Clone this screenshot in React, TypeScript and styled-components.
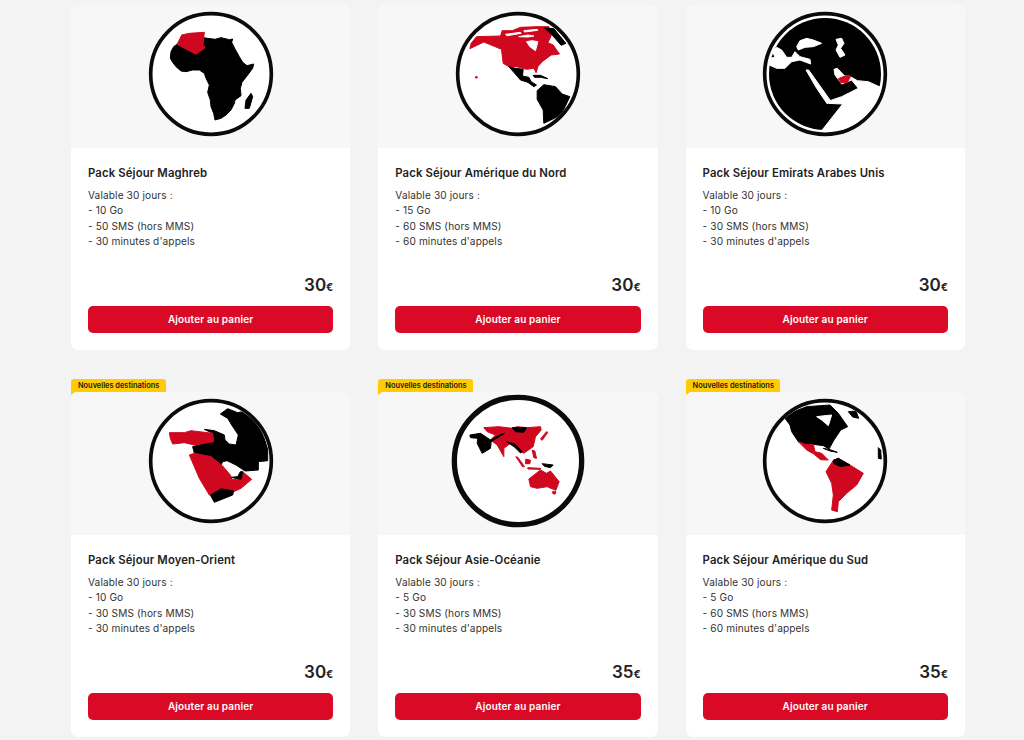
import React from "react";
import styled, { createGlobalStyle } from "styled-components";

const Global = createGlobalStyle`
  html, body { margin: 0; padding: 0; height: 740px; overflow: hidden; background: #f3f3f3; }
  body { font-family: Inter, "Noto Sans", "Liberation Sans", sans-serif; color: #1a1a1a; }
`;
const Grid = styled.main`
  display: grid;
  grid-template-columns: repeat(3, 279.3px);
  column-gap: 28px;
  row-gap: 42px;
  padding: 5px 0 0 71px;
`;
const Card = styled.article`
  position: relative;
  height: 345px;
  display: flex;
  flex-direction: column;
  border-radius: 7px;
  background: #fff;
`;
const Badge = styled.span`
  position: absolute;
  left: 0;
  top: -13px;
  width: 94.5px;
  height: 13px;
  padding-left: 7px;
  box-sizing: border-box;
  background: #ffcb05;
  border-radius: 3px 3px 0 0;
  font-size: 7.4px;
  font-weight: 600;
  line-height: 13px;
  white-space: nowrap;
  &::after {
    content: "";
    position: absolute;
    left: 0;
    bottom: -3px;
    border-top: 3px solid #ffcb05;
    border-right: 4px solid transparent;
  }
`;
const Visual = styled.div`
  height: 143px;
  display: flex;
  justify-content: center;
  background: #f7f7f7;
  border-radius: 7px 7px 0 0;
`;
const Body = styled.div`
  flex: 1;
  display: flex;
  flex-direction: column;
  padding: 17px 17px 17px;
`;
const Title = styled.h3`
  margin: 0 0 6px;
  font-size: 11.3px;
  line-height: 17px;
  font-weight: 600;
  letter-spacing: 0.14px;
  color: #222;
`;
const Desc = styled.p`
  margin: 0;
  font-size: 10.1px;
  line-height: 15.4px;
  letter-spacing: 0.13px;
  color: #333;
  white-space: pre-line;
`;
const Price = styled.div`
  margin-top: auto;
  text-align: right;
  font-size: 17px;
  line-height: 22px;
  font-weight: 600;
  color: #222;
  small { font-size: 10.5px; font-weight: 700; }
`;
const Button = styled.button`
  margin-top: 7px;
  height: 27.5px;
  border: 0;
  border-radius: 5px;
  background: #da0a27;
  color: #fff;
  font: 600 10px Inter, "Liberation Sans", sans-serif;
  letter-spacing: 0.14px;
`;

const R = "#d0081f";
const K = "#000";
const W = "#fff";
type Shape = [string, string];
type MapDef = { dx: number; dy: number; r?: number; sw?: number; shapes: Shape[]; disc?: boolean };

const maps: Record<string, MapDef> = {
  maghreb: {
    dx: 0, dy: 0,
    shapes: [
      [K, "108,118 98,125 90,140 88,160 95,172 105,185 120,198 135,200 155,195 175,195 190,205 195,220 205,240 200,262 208,285 210,305 218,325 222,345 240,340 255,330 270,315 280,295 282,285 300,272 298,250 303,232 320,210 335,190 338,177 318,182 305,172 295,155 282,132 272,112 275,102 265,104 240,98 222,103 200,100 188,98 186,118 192,128 165,148"],
      [R, "122,90 145,85 190,82 188,100 186,118 192,128 165,148 135,132 108,118 115,105"],
      [K, "330,265 335,275 325,310 312,310 315,285"],
    ],
  },
  nord: {
    dx: -22.5, dy: -15,
    shapes: [
      [R, "88,146 92,130 108,110 180,108 185,92 215,92 240,82 290,80 325,80 332,108 322,128 338,135 357,162 332,165 305,185 292,200 287,218 280,205 258,208 228,200 205,200 188,190 183,148 130,126"],
      [W, "258,125 275,122 292,125 285,152 268,140"],
      [W, "195,103 240,97 242,100 200,107"],
      [W, "250,92 290,88 292,91 252,96"],
      [W, "235,110 262,105 280,108 262,111"],
      [K, "205,200 225,205 248,208 246,228 265,232 272,245 288,255 280,260 262,247 240,240 220,217"],
      [K, "312,84 340,86 376,130 362,136 335,105"],
      [K, "290,272 310,254 345,260 365,282 388,290 362,345 310,370 308,330 290,298"],
      [K, "278,226 300,226 322,236 300,232 282,232"],
      [R, "105,230 110,230 110,234 105,234"],
    ],
  },
  emirats: {
    dx: -15, dy: -15, disc: true,
    shapes: [
      [W, "58,175 75,172 68,155 80,142 95,150 110,172 125,172 135,155 150,170 180,178 182,192 150,180 125,185 105,205 80,205 58,195"],
      [W, "150,122 170,115 190,120 215,130 190,140 165,142 145,150 140,140"],
      [W, "258,118 275,115 282,130 272,145 285,165 270,172 258,150 265,135"],
      [W, "168,210 176,210 240,300 232,312 200,265"],
      [W, "252,208 262,205 282,226 305,232 322,242 355,245 392,262 402,300 340,385 215,392 278,312 235,310 240,302 275,290 325,265 305,240 275,252 255,225"],
      [R, "265,236 290,226 302,228 292,248 272,248"],
    ],
  },
  moyen: {
    dx: 0, dy: -6,
    shapes: [
      [K, "160,190 155,170 190,160 218,155 215,130 190,118 220,122 250,135 252,150 265,162 285,165 292,135 272,105 260,85 238,72 260,56 290,68 320,62 345,90 368,140 380,178 380,212 352,215 352,240 312,243 285,225 258,212 245,215 240,225 210,200"],
      [R, "85,128 130,128 150,122 215,130 218,155 160,165 130,158 95,162 88,145"],
      [R, "145,195 160,190 210,200 245,228 268,255 272,268 300,268 305,245 332,268 300,295 278,305 240,295 205,315 175,265"],
      [K, "270,262 300,268 305,245 298,245 290,260"],
      [K, "208,315 240,296 278,303 275,315 220,337"],
    ],
  },
  asie: {
    dx: -22.5, dy: -21, r: 191, sw: 16,
    shapes: [
      [R, "130,128 175,125 215,130 230,125 260,128 300,125 302,135 285,155 278,185 250,205 235,195 225,180 210,175 190,190 190,215 170,180 150,165 165,150 140,140"],
      [K, "88,150 120,145 150,165 178,150 192,145 152,170 150,190 125,205 110,175 112,160 90,158"],
      [K, "215,128 258,128 250,142 225,140"],
      [K, "198,170 225,178 245,200 240,204 222,186"],
      [R, "265,282 300,255 318,265 330,258 356,290 346,316 320,305 290,310 270,305"],
      [R, "336,320 346,320 344,327 338,327"],
      [R, "226,215 232,217 252,245 246,245"],
      [R, "256,222 270,226 268,236 255,236"],
      [R, "275,195 283,198 288,220 280,218"],
      [K, "305,236 338,240 330,248 312,244"],
      [R, "300,162 318,140 322,142 305,166"],
      [R, "262,248 300,250 300,253 262,252"],
    ],
  },
  sud: {
    dx: -15, dy: -21,
    shapes: [
      [K, "105,100 130,80 170,65 240,60 265,85 293,125 272,135 252,165 237,192 220,182 190,178 165,178 145,170 125,140 120,120"],
      [W, "200,95 225,92 245,90 235,122 215,105"],
      [K, "295,80 318,78 326,100 308,96"],
      [K, "385,188 392,195 394,222 385,220"],
      [R, "145,170 165,178 190,178 195,200 215,205 235,225 212,224 190,206 170,195"],
      [R, "250,226 265,220 300,240 340,265 320,300 290,325 265,350 262,380 245,375 250,330 245,295 228,260"],
      [K, "250,226 265,220 300,240 272,245 252,236"],
      [K, "220,190 240,194 262,202 240,198"],
    ],
  },
};

const Globe = ({ id }: { id: string }) => {
  const m = maps[id];
  const r = m.r ?? 181;
  const sw = m.sw ?? 11;
  return (
    <svg width="140" height="140" viewBox="0 0 420 420" aria-hidden="true">
      <defs>
        <clipPath id={`clip-${id}`}>
          <circle cx="210" cy="207" r={m.disc ? 175 : r - sw / 2} />
        </clipPath>
      </defs>
      <circle cx="210" cy="207" r={r} fill="#fff" stroke="#0a0a0a" strokeWidth={sw} />
      {m.disc && <circle cx="210" cy="207" r="168" fill="#000" />}
      <g clipPath={`url(#clip-${id})`}>
        <g transform={`translate(${m.dx} ${m.dy})`} strokeWidth="3" strokeLinejoin="round">
          {m.shapes.map(([fill, points], i) => (
            <polygon key={i} fill={fill} stroke={fill} points={points} />
          ))}
        </g>
      </g>
    </svg>
  );
};

type Pack = { map: string; name: string; go: number; sms: number; min: number; price: number; fresh?: boolean };
const packs: Pack[] = [
  { map: "maghreb", name: "Maghreb", go: 10, sms: 50, min: 30, price: 30 },
  { map: "nord", name: "Amérique du Nord", go: 15, sms: 60, min: 60, price: 30 },
  { map: "emirats", name: "Emirats Arabes Unis", go: 10, sms: 30, min: 30, price: 30 },
  { map: "moyen", name: "Moyen-Orient", go: 10, sms: 30, min: 30, price: 30, fresh: true },
  { map: "asie", name: "Asie-Océanie", go: 5, sms: 30, min: 30, price: 35, fresh: true },
  { map: "sud", name: "Amérique du Sud", go: 5, sms: 60, min: 60, price: 35, fresh: true },
];

export default function App() {
  return (
    <>
      <Global />
      <Grid>
        {packs.map((p) => (
          <Card key={p.map}>
            {p.fresh && <Badge>Nouvelles destinations</Badge>}
            <Visual>
              <Globe id={p.map} />
            </Visual>
            <Body>
              <Title>Pack Séjour {p.name}</Title>
              <Desc>{`Valable 30 jours :\n- ${p.go} Go\n- ${p.sms} SMS (hors MMS)\n- ${p.min} minutes d'appels`}</Desc>
              <Price>
                {p.price}
                <small>€</small>
              </Price>
              <Button>Ajouter au panier</Button>
            </Body>
          </Card>
        ))}
      </Grid>
    </>
  );
}
